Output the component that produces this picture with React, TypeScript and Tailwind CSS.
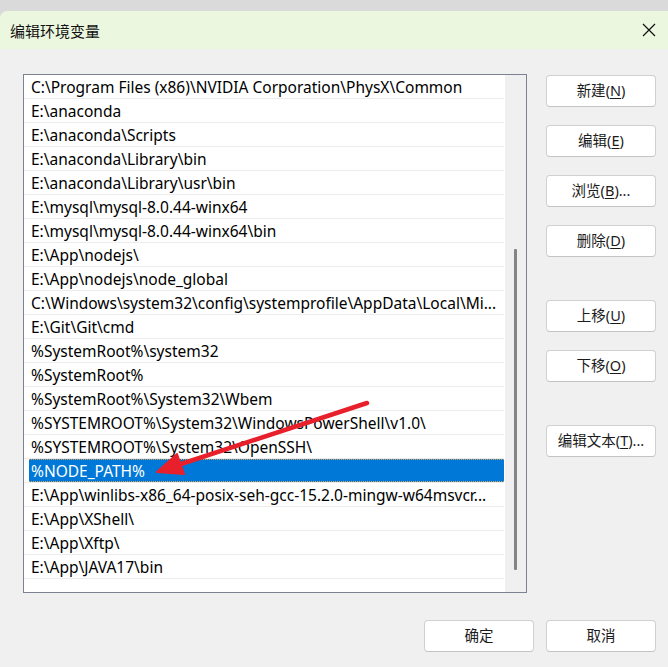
import React from 'react';

const paths = [
  'C:\\Program Files (x86)\\NVIDIA Corporation\\PhysX\\Common',
  'E:\\anaconda',
  'E:\\anaconda\\Scripts',
  'E:\\anaconda\\Library\\bin',
  'E:\\anaconda\\Library\\usr\\bin',
  'E:\\mysql\\mysql-8.0.44-winx64',
  'E:\\mysql\\mysql-8.0.44-winx64\\bin',
  'E:\\App\\nodejs\\',
  'E:\\App\\nodejs\\node_global',
  'C:\\Windows\\system32\\config\\systemprofile\\AppData\\Local\\Mi...',
  'E:\\Git\\Git\\cmd',
  '%SystemRoot%\\system32',
  '%SystemRoot%',
  '%SystemRoot%\\System32\\Wbem',
  '%SYSTEMROOT%\\System32\\WindowsPowerShell\\v1.0\\',
  '%SYSTEMROOT%\\System32\\OpenSSH\\',
  '%NODE_PATH%',
  'E:\\App\\winlibs-x86_64-posix-seh-gcc-15.2.0-mingw-w64msvcr...',
  'E:\\App\\XShell\\',
  'E:\\App\\Xftp\\',
  'E:\\App\\JAVA17\\bin',
];

const SELECTED = 16;

function Btn({ label, hot, suffix = '', className = '' }: { label: string; hot: string; suffix?: string; className?: string }) {
  return (
    <button
      className={`w-[110px] h-[32px] shrink-0 rounded-[4px] border border-[#d0d0d0] border-b-[#c4c4c4] bg-white text-[14.5px] text-[#1b1b1b] flex items-center justify-center ${className}`}
    >
      {label}
      {hot && (
        <>
          (<span className="underline underline-offset-2">{hot}</span>){suffix}
        </>
      )}
    </button>
  );
}

export default function App() {
  return (
    <div
      className="w-[668px] h-[667px] overflow-hidden bg-gradient-to-b from-[#dadada] to-[#e6e6e6] pt-[11px] relative"
      style={{ fontFamily: '"Noto Sans", "Noto Sans CJK SC", sans-serif' }}
    >
      <div className="rounded-tl-[8px] overflow-hidden bg-[#f0f0f0] h-[656px] flex flex-col">
        {/* title bar */}
        <div className="h-[38px] bg-[#ecf7e0] flex items-center justify-between pl-[10px] pr-[8px]">
          <span className="text-[15px] text-[#111] leading-none" style={{ fontFamily: '"Noto Sans CJK SC", sans-serif' }}>
            编辑环境变量
          </span>
          <svg width="14" height="14" viewBox="0 0 14 14" className="mr-[4px]">
            <path d="M1 1 L13 13 M13 1 L1 13" stroke="#111" strokeWidth="1.2" />
          </svg>
        </div>

        <div className="flex pt-[25px]">
          {/* list box */}
          <div className="ml-[23px] w-[504px] h-[519px] border border-[#7d8290] bg-white flex">
            <div className="w-[480px] flex flex-col">
              {paths.map((p, i) =>
                i === SELECTED ? (
                  <div key={i} className="h-[24px] shrink-0 border-b border-[#ececec] flex">
                    <div className="ml-[5px] flex-1 bg-[#0078d7] text-white text-[15.5px] pl-[2px] pt-[2px] flex items-center border-y border-dotted border-[#d4a25a] whitespace-nowrap overflow-hidden">
                      {p}
                    </div>
                  </div>
                ) : (
                  <div
                    key={i}
                    className="h-[24px] shrink-0 border-b border-[#ececec] text-[15.5px] text-black pl-[7px] pt-[2px] flex items-center whitespace-nowrap overflow-hidden"
                  >
                    {p}
                  </div>
                )
              )}
            </div>
            {/* scrollbar */}
            <div className="ml-[1px] w-[21px] bg-[#f0f0f0] flex flex-col items-center">
              <div className="mt-[174px] w-[3px] h-[321px] bg-[#858585] rounded-[1px] ml-[-1px]" />
            </div>
          </div>

          {/* right buttons */}
          <div className="ml-[19px] flex flex-col pt-[1px]">
            <Btn label="新建" hot="N" />
            <Btn label="编辑" hot="E" className="mt-[18px]" />
            <Btn label="浏览" hot="B" suffix="..." className="mt-[18px]" />
            <Btn label="删除" hot="D" className="mt-[18px]" />
            <Btn label="上移" hot="U" className="mt-[43px]" />
            <Btn label="下移" hot="O" className="mt-[18px]" />
            <Btn label="编辑文本" hot="T" suffix="..." className="mt-[43px]" />
          </div>
        </div>

        {/* bottom buttons */}
        <div className="flex justify-end gap-[12px] pr-[12px] mt-[27px]">
          <Btn label="确定" hot="" />
          <Btn label="取消" hot="" />
        </div>
      </div>

      {/* red annotation arrow */}
      <svg className="absolute left-0 top-0 pointer-events-none" width="668" height="667">
        <line x1="367" y1="403" x2="178" y2="465" stroke="#e8202b" strokeWidth="4.5" strokeLinecap="round" />
        <polygon points="157,472 177,454 184,474" fill="#e8202b" stroke="#e8202b" strokeWidth="2" strokeLinejoin="round" />
      </svg>
    </div>
  );
}
